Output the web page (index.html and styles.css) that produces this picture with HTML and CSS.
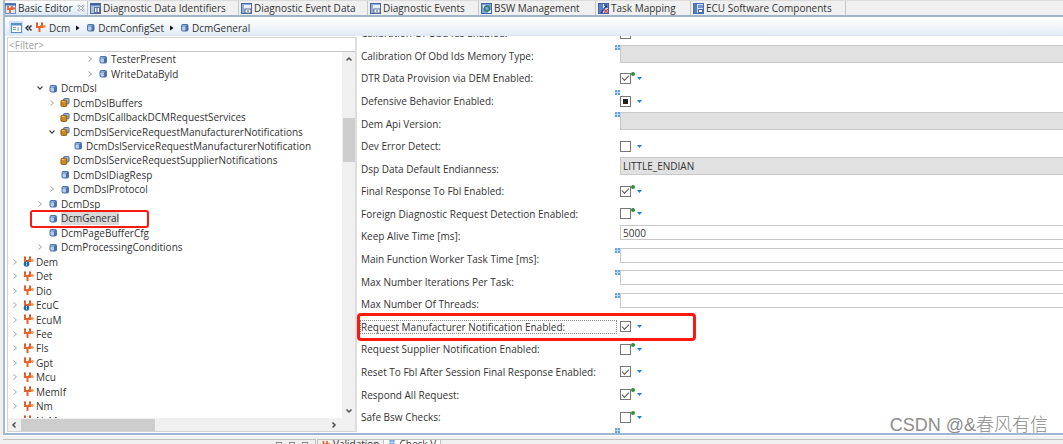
FILE: index.html
```html
<!DOCTYPE html>
<html lang="en">
<head>
<meta charset="utf-8">
<title>Basic Editor</title>
<link rel="stylesheet" href="styles.css">
</head>
<body>
<svg class="defs" aria-hidden="true">
  <defs>
    <symbol id="cube" viewBox="0 0 9 9">
      <rect x="1" y="1" width="7.5" height="7.5" rx="2" fill="#4a72ae"/>
      <path d="M2 2h5L5.500 3.500H2z" fill="#86a9d8"/>
      <rect x="2" y="3.500" width="3.500" height="4" rx="1" fill="#b9cdea"/>
    </symbol>
    <symbol id="stack" viewBox="0 0 10 10">
      <rect x="3.500" y="0.500" width="6" height="6" rx="1" fill="#9fb4d8" stroke="#445f92"/>
      <rect x="0.500" y="2.500" width="6.500" height="7" rx="1.500" fill="#c98a1c" stroke="#83520d"/>
      <path d="M1.500 4h3" stroke="#f4cf73"/>
    </symbol>
    <symbol id="module" viewBox="0 0 11 11">
      <path d="M2 1v4h5V1M4.500 5v5M5 4.500h5" fill="none" stroke="#e9622c" stroke-width="2"/>
      <path d="M1 1h2M6 1h2" stroke="#c8441c"/>
      <circle cx="9.500" cy="4.500" r="1.300" fill="#f39a4a"/>
    </symbol>
    <symbol id="module-info" viewBox="0 0 11 11">
      <use href="#module" width="11" height="11"/>
      <circle cx="3.500" cy="8" r="2.800" fill="#1766b8"/>
      <path d="M3.500 7.500v2M3.500 6v1" stroke="#fff" stroke-width="0.800"/>
    </symbol>
    <symbol id="doc-module" viewBox="0 0 11 11">
      <rect x="0.500" y="0.500" width="10" height="10" fill="#dce8f7" stroke="#6f93c4"/>
      <path d="M0 1.500h11" stroke="#3d6dac" stroke-width="2"/>
      <path d="M3 3v3h4V3M5 6v4M5 5.500h5" fill="none" stroke="#e9622c" stroke-width="1.800"/>
    </symbol>
    <symbol id="doc-id" viewBox="0 0 11 11">
      <rect x="0.500" y="0.500" width="10" height="10" fill="#a9c2e6" stroke="#4a6ca5"/>
      <path d="M1 1.500h9" stroke="#3b5f9c" stroke-width="2"/>
      <rect x="4.500" y="4.500" width="5" height="5" fill="#eef3fa" stroke="#5d7194"/>
      <path d="M6 6h2M6 8h2" stroke="#3c568a"/>
    </symbol>
    <symbol id="doc-event" viewBox="0 0 11 11">
      <rect x="0.500" y="0.500" width="10" height="10" fill="#93afd9" stroke="#46669f"/>
      <path d="M3 2h7v4H3z" fill="#e8eff9"/>
      <rect x="4" y="6" width="6" height="4" fill="#fff" stroke="#5c6d91"/>
      <path d="M6 8h2" stroke="#3b558d"/>
    </symbol>
    <symbol id="doc-bsw" viewBox="0 0 11 11">
      <rect x="0.500" y="0.500" width="10" height="10" fill="#7ea5dc" stroke="#3d66a5"/>
      <path d="M2 2h3v3H2zM7 7h3v3H7z" fill="#d8e6f8"/>
      <circle cx="6" cy="5.500" r="2.500" fill="none" stroke="#2d7b67" stroke-width="1.500"/>
    </symbol>
    <symbol id="doc-task" viewBox="0 0 11 11">
      <rect x="0.500" y="0.500" width="10" height="10" fill="#dce7f7" stroke="#3e62a4"/>
      <path d="M1 1h4v9H1z" fill="#5c83c4"/>
      <path d="M3 10 9 2M6 2h3v3" fill="none" stroke="#1f4488" stroke-width="1.300"/>
      <path d="M6 6l4 4M10 6l-4 4" stroke="#cf4752" stroke-width="1.300"/>
    </symbol>
    <symbol id="doc-ecu" viewBox="0 0 11 11">
      <rect x="0.500" y="0.500" width="10" height="10" fill="#d4e2f6" stroke="#4470b4"/>
      <path d="M1 1h3v9H1z" fill="#4f7cc2"/>
      <rect x="5" y="2" width="5" height="3" fill="#6f96d2"/>
      <rect x="5.500" y="6.500" width="4" height="3" fill="#fff" stroke="#4168a8"/>
    </symbol>
    <symbol id="panel" viewBox="0 0 11 10">
      <rect x="0.500" y="0.500" width="10" height="9" fill="#fff" stroke="#5b8ec4"/>
      <path d="M0 1.500h11" stroke="#5b8ec4" stroke-width="2"/>
      <path d="M2 4.500h3M2 6.500h3M7 4v4" stroke="#7aa883"/>
    </symbol>
    <symbol id="closed" viewBox="0 0 8 8"><path d="M2.500 1.500 5.500 4l-3 2.500" fill="none" stroke="#a2a2a2"/></symbol>
    <symbol id="open" viewBox="0 0 8 8"><path d="M1.500 2.500 4 5.200 6.500 2.500" fill="none" stroke="#444" stroke-width="1.200"/></symbol>
    <symbol id="chev" viewBox="0 0 8 8"><path d="M1.500 5.500 4 3l2.500 2.500" fill="none" stroke="#505050" stroke-width="1.500"/></symbol>
    <symbol id="back" viewBox="0 0 8 8"><path d="M3.500 1.500 1 4l2.500 2.500M6.500 1.500 4 4l2.500 2.500" fill="none" stroke="#222" stroke-width="1.300"/></symbol>
    <symbol id="sep" viewBox="0 0 8 8"><path d="M2 1.500 5.500 4 2 6.500z" fill="#111"/></symbol>
    <symbol id="close" viewBox="0 0 8 8"><path d="M1 1l6 6M7 1 1 7" stroke="#a7adb5" stroke-width="2.200"/><path d="M1.500 1.500l5 5M6.500 1.500l-5 5" stroke="#f4f7fb"/></symbol>
    <symbol id="unset" viewBox="0 0 5 5"><rect width="5" height="5" fill="#b9d7f5"/><path d="M0 0h2v2H0zM3 0h2v2H3zM0 3h2v2H0zM3 3h2v2H3z" fill="#64a2e2"/></symbol>
    <symbol id="down" viewBox="0 0 5 3"><path d="M0 0h5L2.500 3z" fill="#1c80dc"/></symbol>
  </defs>
</svg>

<div class="app">
  <main class="editor">
    <nav class="tabs" aria-label="Editors">
      <button class="tab tab-active"><svg><use href="#doc-module"/></svg>Basic Editor<svg class="x"><use href="#close"/></svg></button>
      <button class="tab t2"><svg><use href="#doc-id"/></svg>Diagnostic Data Identifiers</button>
      <button class="tab t3"><svg><use href="#doc-event"/></svg>Diagnostic Event Data</button>
      <button class="tab t4"><svg><use href="#doc-event"/></svg>Diagnostic Events</button>
      <button class="tab t5"><svg><use href="#doc-bsw"/></svg>BSW Management</button>
      <button class="tab t6"><svg><use href="#doc-task"/></svg>Task Mapping</button>
      <button class="tab t7"><svg><use href="#doc-ecu"/></svg>ECU Software Components</button>
    </nav>

    <nav class="crumbs" aria-label="Path">
      <button class="toggle" aria-label="Toggle tree"><svg><use href="#panel"/></svg></button>
      <svg class="s8"><use href="#back"/></svg>
      <a href="#"><svg class="s11"><use href="#module"/></svg>Dcm</a>
      <svg class="s8 sep"><use href="#sep"/></svg>
      <a href="#"><svg class="s9"><use href="#cube"/></svg>DcmConfigSet</a>
      <svg class="s8 sep"><use href="#sep"/></svg>
      <a href="#"><svg class="s9"><use href="#cube"/></svg>DcmGeneral</a>
    </nav>

    <div class="body">
      <section class="side">
        <input class="filter" type="text" placeholder="&lt;Filter&gt;" aria-label="Filter">
        <div class="tree-wrap">
          <ul class="tree">
            <li class="lv6"><svg class="tw"><use href="#closed"/></svg><svg class="ic"><use href="#cube"/></svg><span>TesterPresent</span></li>
            <li class="lv6"><svg class="tw"><use href="#closed"/></svg><svg class="ic"><use href="#cube"/></svg><span>WriteDataById</span></li>
            <li class="lv2"><svg class="tw"><use href="#open"/></svg><svg class="ic"><use href="#cube"/></svg><span>DcmDsl</span></li>
            <li class="lv3"><svg class="tw"><use href="#closed"/></svg><svg class="ic"><use href="#stack"/></svg><span>DcmDslBuffers</span></li>
            <li class="lv3"><svg class="tw"></svg><svg class="ic"><use href="#stack"/></svg><span>DcmDslCallbackDCMRequestServices</span></li>
            <li class="lv3"><svg class="tw"><use href="#open"/></svg><svg class="ic"><use href="#stack"/></svg><span>DcmDslServiceRequestManufacturerNotifications</span></li>
            <li class="lv4"><svg class="tw"></svg><svg class="ic"><use href="#cube"/></svg><span>DcmDslServiceRequestManufacturerNotification</span></li>
            <li class="lv3"><svg class="tw"></svg><svg class="ic"><use href="#stack"/></svg><span>DcmDslServiceRequestSupplierNotifications</span></li>
            <li class="lv3"><svg class="tw"></svg><svg class="ic"><use href="#cube"/></svg><span>DcmDslDiagResp</span></li>
            <li class="lv3"><svg class="tw"><use href="#closed"/></svg><svg class="ic"><use href="#cube"/></svg><span>DcmDslProtocol</span></li>
            <li class="lv2"><svg class="tw"><use href="#closed"/></svg><svg class="ic"><use href="#cube"/></svg><span>DcmDsp</span></li>
            <li class="lv2 selected"><svg class="tw"></svg><svg class="ic"><use href="#cube"/></svg><span>DcmGeneral</span></li>
            <li class="lv2"><svg class="tw"></svg><svg class="ic"><use href="#cube"/></svg><span>DcmPageBufferCfg</span></li>
            <li class="lv2"><svg class="tw"><use href="#closed"/></svg><svg class="ic"><use href="#cube"/></svg><span>DcmProcessingConditions</span></li>
            <li class="mod"><svg class="tw"><use href="#closed"/></svg><svg class="ic"><use href="#module-info"/></svg><span>Dem</span></li>
            <li class="mod"><svg class="tw"><use href="#closed"/></svg><svg class="ic"><use href="#module"/></svg><span>Det</span></li>
            <li class="mod"><svg class="tw"><use href="#closed"/></svg><svg class="ic"><use href="#module"/></svg><span>Dio</span></li>
            <li class="mod"><svg class="tw"><use href="#closed"/></svg><svg class="ic"><use href="#module-info"/></svg><span>EcuC</span></li>
            <li class="mod"><svg class="tw"><use href="#closed"/></svg><svg class="ic"><use href="#module"/></svg><span>EcuM</span></li>
            <li class="mod"><svg class="tw"><use href="#closed"/></svg><svg class="ic"><use href="#module"/></svg><span>Fee</span></li>
            <li class="mod"><svg class="tw"><use href="#closed"/></svg><svg class="ic"><use href="#module"/></svg><span>Fls</span></li>
            <li class="mod"><svg class="tw"><use href="#closed"/></svg><svg class="ic"><use href="#module"/></svg><span>Gpt</span></li>
            <li class="mod"><svg class="tw"><use href="#closed"/></svg><svg class="ic"><use href="#module"/></svg><span>Mcu</span></li>
            <li class="mod"><svg class="tw"><use href="#closed"/></svg><svg class="ic"><use href="#module"/></svg><span>MemIf</span></li>
            <li class="mod"><svg class="tw"><use href="#closed"/></svg><svg class="ic"><use href="#module"/></svg><span>Nm</span></li>
            <li class="mod"><svg class="tw"></svg><svg class="ic"><use href="#module"/></svg><span>NvM</span></li>
          </ul>
          <div class="vbar"><svg><use href="#chev"/></svg><div class="vthumb"></div><svg class="flip"><use href="#chev"/></svg></div>
        </div>
        <div class="hbar"><svg class="left"><use href="#chev"/></svg><div class="hthumb"></div><svg class="right"><use href="#chev"/></svg></div>
      </section>

      <form class="form">
        <div class="rows">
          <div class="row"><label for="f0">Calibration Of Obd Ids Enabled:</label><div class="ctl chk"><input type="checkbox" id="f0"></div></div>
          <div class="row"><label for="f1">Calibration Of Obd Ids Memory Type:</label><div class="ctl"><svg class="mark"><use href="#unset"/></svg><input class="field off" type="text" id="f1" readonly></div></div>
          <div class="row"><label for="f2">DTR Data Provision via DEM Enabled:</label><div class="ctl chk user"><input type="checkbox" id="f2" checked><button type="button" aria-label="Options"><svg><use href="#down"/></svg></button></div></div>
          <div class="row"><label for="f3">Defensive Behavior Enabled:</label><div class="ctl chk"><svg class="mark"><use href="#unset"/></svg><input class="mixed" type="checkbox" id="f3"><button type="button" aria-label="Options"><svg><use href="#down"/></svg></button></div></div>
          <div class="row"><label for="f4">Dem Api Version:</label><div class="ctl"><svg class="mark"><use href="#unset"/></svg><input class="field off" type="text" id="f4" readonly></div></div>
          <div class="row"><label for="f5">Dev Error Detect:</label><div class="ctl chk"><input type="checkbox" id="f5"><button type="button" aria-label="Options"><svg><use href="#down"/></svg></button></div></div>
          <div class="row"><label for="f6">Dsp Data Default Endianness:</label><div class="ctl"><select class="field off" id="f6"><option>LITTLE_ENDIAN</option></select></div></div>
          <div class="row"><label for="f7">Final Response To Fbl Enabled:</label><div class="ctl chk user"><input type="checkbox" id="f7" checked><button type="button" aria-label="Options"><svg><use href="#down"/></svg></button></div></div>
          <div class="row"><label for="f8">Foreign Diagnostic Request Detection Enabled:</label><div class="ctl chk user"><input type="checkbox" id="f8"><button type="button" aria-label="Options"><svg><use href="#down"/></svg></button></div></div>
          <div class="row"><label for="f9">Keep Alive Time [ms]:</label><div class="ctl"><input class="field" type="text" id="f9" value="5000"></div></div>
          <div class="row"><label for="f10">Main Function Worker Task Time [ms]:</label><div class="ctl"><svg class="mark"><use href="#unset"/></svg><input class="field" type="text" id="f10"></div></div>
          <div class="row"><label for="f11">Max Number Iterations Per Task:</label><div class="ctl"><svg class="mark"><use href="#unset"/></svg><input class="field" type="text" id="f11"></div></div>
          <div class="row"><label for="f12">Max Number Of Threads:</label><div class="ctl"><svg class="mark"><use href="#unset"/></svg><input class="field" type="text" id="f12"></div></div>
          <div class="row focus"><label for="f13">Request Manufacturer Notification Enabled:</label><div class="ctl chk"><input type="checkbox" id="f13" checked><button type="button" aria-label="Options"><svg><use href="#down"/></svg></button></div></div>
          <div class="row"><label for="f14">Request Supplier Notification Enabled:</label><div class="ctl chk user"><input type="checkbox" id="f14"><button type="button" aria-label="Options"><svg><use href="#down"/></svg></button></div></div>
          <div class="row"><label for="f15">Reset To Fbl After Session Final Response Enabled:</label><div class="ctl chk"><input type="checkbox" id="f15" checked><button type="button" aria-label="Options"><svg><use href="#down"/></svg></button></div></div>
          <div class="row"><label for="f16">Respond All Request:</label><div class="ctl chk user"><input type="checkbox" id="f16" checked><button type="button" aria-label="Options"><svg><use href="#down"/></svg></button></div></div>
          <div class="row"><label for="f17">Safe Bsw Checks:</label><div class="ctl chk user"><input type="checkbox" id="f17"><button type="button" aria-label="Options"><svg><use href="#down"/></svg></button></div></div>
          <div class="row"><span></span><div class="ctl"><svg class="mark"><use href="#unset"/></svg></div></div>
        </div>
      </form>
    </div>
  </main>

  <footer class="dock">
    <div class="winbtns"><i></i><i></i><i></i></div>
    <div class="docktabs">
      <button class="dtab"><svg><use href="#module-info"/></svg>Validation</button>
      <button class="dtab dtab-on"><svg><use href="#unset"/></svg>Check V</button>
    </div>
  </footer>
  <div class="watermark">CSDN @&amp;春风有信</div>
</div>
</body>
</html>
```
FILE: styles.css
```css
*, ::before, ::after { box-sizing: border-box; }
body {
  margin: 0;
  background: #f0f0f0;
  color: #333;
  font: 10px/14px "Open Sans", "Noto Sans", sans-serif;
  overflow: hidden;
}
button, input, select { font: inherit; color: inherit; margin: 0; border-radius: 0; }
button { border: 0; padding: 0; background: none; }
svg { flex: none; overflow: visible; }
.defs { position: absolute; width: 0; height: 0; }

.app { position: relative; display: flex; flex-direction: column; height: 100vh; padding-left: 3px; }
.editor {
  flex: 1;
  min-height: 0;
  display: flex;
  flex-direction: column;
  border-left: 2px solid #a3bbd6;
  border-bottom: 2px solid #9db6d2;
  background: #fff;
}

.tabs { display: flex; height: 17px; background: #f0f0f0; border-top: 1px solid #dcdcdc; border-bottom: 2px solid #9fb4ca; }
.tab { display: flex; align-items: center; gap: 2px; padding-left: 2px; border-right: 1px solid #c6c6c6; white-space: nowrap; text-align: left; }
.tab svg { width: 11px; height: 11px; }
.tab .x { width: 8px; height: 8px; margin-left: 2px; }
.tab-active { width: 83px; padding-left: 0; background: linear-gradient(#fff, #dbe8f5); }
.t2 { width: 151px; }
.t3 { width: 129px; }
.t4 { width: 111px; }
.t5 { width: 117px; }
.t6 { width: 95px; }
.t7 { width: 155px; }

.crumbs { display: flex; align-items: center; gap: 2px; height: 19px; padding: 3px 0 0 4px; background: linear-gradient(#fff, #e3ecf5); border-bottom: 1px solid #dde7f1; }
.crumbs a { display: flex; align-items: center; gap: 3px; color: inherit; text-decoration: none; }
.toggle { display: grid; place-items: center; width: 14px; height: 13px; background: #cfe4f8; }
.toggle svg { width: 11px; height: 10px; }
.s8 { width: 8px; height: 8px; }
.sep { margin: 0 2px; }
.s9 { width: 9px; height: 9px; }
.s11 { width: 11px; height: 11px; }

.body { flex: 1; min-height: 0; display: grid; grid-template-columns: 352px 1fr; }
.side { display: flex; flex-direction: column; min-height: 0; margin: 1px 0 1px 2px; border: 1px solid #d4d4d4; border-right: 2px solid #dedede; }
.filter { height: 14px; padding: 0 1px; border: 0; border-bottom: 1px solid #c4c4c4; outline: 0; }
.filter::placeholder { color: #a0a0a0; opacity: 1; }
.tree-wrap { flex: 1; min-height: 0; display: flex; overflow: hidden; }
.tree { flex: 1; display: grid; grid-auto-rows: 1fr; height: 376px; margin: 0; padding: 0 0 0 3px; list-style: none; }
.tree li { position: relative; display: flex; align-items: center; min-height: 0; white-space: nowrap; }
.tw { width: 8px; height: 8px; }
.ic { width: 10px; height: 9px; margin: 0 3px 0 4px; }
.mod .ic { width: 11px; height: 11px; margin-right: 2px; }
.tree .lv2 { padding-left: 25px; }
.tree .lv3 { padding-left: 37px; }
.tree .lv4 { padding-left: 50px; }
.tree .lv6 { padding-left: 75px; }
.selected span { background: #d9d9d9; line-height: 13px; }
.selected::after { content: ""; position: absolute; left: 19px; top: -1px; width: 119px; height: 18px; border: 2px solid #fb1a10; border-radius: 3px; }

.vbar { display: flex; flex-direction: column; align-items: center; width: 13px; padding: 3px 0; background: #f0f0f0; }
.vbar svg, .hbar svg { width: 8px; height: 8px; }
.vthumb { width: 12px; height: 44px; margin: 55px 0 auto; background: #cdcdcd; }
.flip { transform: rotate(180deg); }
.hbar { display: flex; align-items: center; height: 13px; padding: 0 17px 0 2px; background: #f0f0f0; }
.hthumb { width: 134px; height: 12px; margin: 0 auto 0 3px; background: #cdcdcd; }
.left { transform: rotate(-90deg); }
.right { transform: rotate(90deg); }

.form { min-width: 0; overflow: hidden; }
.rows { display: grid; grid-auto-rows: 1fr; height: 429px; margin-top: -14px; }
.row { position: relative; display: grid; grid-template-columns: 255px 1fr; gap: 4px; padding-left: 4px; min-height: 0; }
.row label { align-self: center; white-space: nowrap; }
.ctl { position: relative; display: flex; align-items: flex-start; }
.chk { align-items: center; }
.mark { position: absolute; left: -5px; top: 0; width: 5px; height: 5px; }
.field { flex: 1; min-width: 0; height: 15px; padding: 0 2px; border: 1px solid #c9c9c9; border-right: 0; background: #fff; outline: 0; appearance: none; }
.off { height: 18px; background: #e1e1e1; }
.chk input { display: grid; place-items: center; width: 11px; height: 11px; border: 1px solid #777; background: #fff; appearance: none; }
.chk input:checked::before { content: ""; width: 7px; height: 4px; border: solid #555; border-width: 0 0 1px 1px; transform: translateY(-1px) rotate(-45deg); }
.chk .mixed::before { content: ""; width: 5px; height: 5px; background: #222; }
.chk button { display: grid; margin-left: 6px; }
.chk button svg { width: 5px; height: 3px; }
.user::after { content: ""; position: absolute; left: 11px; top: 5px; width: 4px; height: 4px; border-radius: 2px; background: #2f8f35; }
.focus label { outline: 1px dotted #888; line-height: 12px; }
.focus::after { content: ""; position: absolute; left: 0; top: -3px; width: 339px; height: 28px; border: 3px solid #fb1a10; border-radius: 4px; pointer-events: none; }

.dock { display: flex; height: 9px; padding-top: 3px; border-top: 1px solid #fff; overflow: hidden; }
.winbtns { display: flex; gap: 7px; width: 313px; padding: 2px 7px 0 0; justify-content: flex-end; border-top: 1px solid #c0c0c0; border-right: 1px solid #c0c0c0; }
.winbtns i { width: 6px; height: 6px; border: 1px solid #888; }
.docktabs { display: flex; flex: 1; height: 12px; margin-left: 1px; border-top: 1px solid #c0c0c0; border-left: 1px solid #c0c0c0; }
.dtab { display: flex; align-items: flex-start; gap: 3px; padding: 0 4px; line-height: 9px; white-space: nowrap; }
.dtab svg { width: 8px; height: 9px; }
.dtab-on { background: #fff; border: solid #c0c0c0; border-width: 0 1px; }
.dtab-on svg { height: 5px; }

.watermark { position: absolute; right: 15px; bottom: 7px; color: #8c8c8c; font: 300 18px/24px "Liberation Sans", "Noto Sans CJK SC", sans-serif; }
```
